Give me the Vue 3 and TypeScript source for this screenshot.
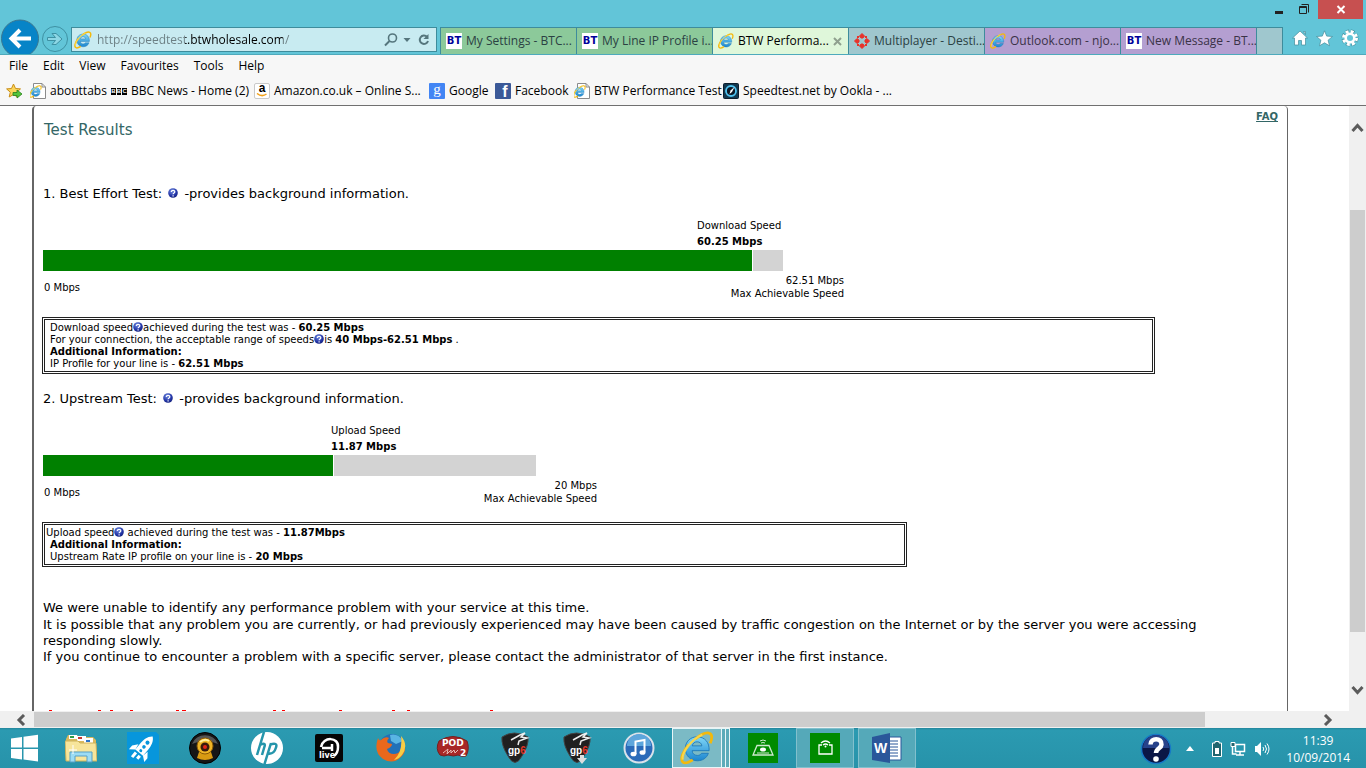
<script setup lang="ts">
import { ref } from 'vue'

interface Tab {
  title: string
  icon: 'bt' | 'ie' | 'diamond'
  tone: 'green' | 'active' | 'teal' | 'purple'
}

interface SpeedChart {
  label: string
  value: string
  max: string
  barWidth: number
  filled: number
  labelOffset: number
}

const address = ref('http://speedtest.btwholesale.com/')

const tabs: Tab[] = [
  { title: 'My Settings - BTC...', icon: 'bt', tone: 'green' },
  { title: 'My Line IP Profile i...', icon: 'bt', tone: 'green' },
  { title: 'BTW Performa...', icon: 'ie', tone: 'active' },
  { title: 'Multiplayer - Desti...', icon: 'diamond', tone: 'teal' },
  { title: 'Outlook.com - njo...', icon: 'ie', tone: 'purple' },
  { title: 'New Message - BT...', icon: 'bt', tone: 'purple' },
]

const menus = ['File', 'Edit', 'View', 'Favourites', 'Tools', 'Help']

const favourites = [
  { title: 'abouttabs', icon: 'page' },
  { title: 'BBC News - Home (2)', icon: 'bbc' },
  { title: 'Amazon.co.uk – Online S...', icon: 'amazon' },
  { title: 'Google', icon: 'google' },
  { title: 'Facebook', icon: 'facebook' },
  { title: 'BTW Performance Test', icon: 'page' },
  { title: 'Speedtest.net by Ookla - ...', icon: 'ookla' },
]

const download: SpeedChart = { label: 'Download Speed', value: '60.25 Mbps', max: '62.51 Mbps', barWidth: 740, filled: 709, labelOffset: 654 }
const upload: SpeedChart = { label: 'Upload Speed', value: '11.87 Mbps', max: '20 Mbps', barWidth: 493, filled: 290, labelOffset: 288 }

const px = (n: number) => `${n}px`
</script>

<template>
  <div class="screen">
    <svg class="defs" aria-hidden="true">
      <defs>
        <linearGradient id="ieBlue" x1="0" y1="0" x2="0" y2="1">
          <stop offset="0" stop-color="#7fd6f7" /><stop offset="1" stop-color="#1c86cf" />
        </linearGradient>
        <radialGradient id="helpFill" cx=".4" cy=".3" r=".8">
          <stop offset="0" stop-color="#6f8be0" /><stop offset=".6" stop-color="#2436a8" /><stop offset="1" stop-color="#101c70" />
        </radialGradient>
        <symbol id="ie" viewBox="0 0 32 32">
          <path d="M16 5.500C9.500 5.500 5 10.300 5 16.500S9.500 28 16.300 28c5 0 8.800-2.500 10.400-7h-6.500c-.8 1.400-2.100 2-3.900 2-2.900 0-4.700-1.700-4.900-4.500h16C27.800 10.800 23.500 5.500 16 5.500zM11.500 14c.5-2.400 2.200-3.800 4.600-3.800s4.200 1.400 4.500 3.800z" fill="url(#ieBlue)" stroke="#1b77b8" stroke-width=".8" />
          <path d="M28.500 11.500c1.800-4.500 2-8-.5-9.200-3-1.400-8.500 1.200-13.500 5.200M8 13C2.500 19.500.2 26.500 2.500 29c1.800 2 5.500.8 9.500-1.800" fill="none" stroke="#f3b90c" stroke-width="2.600" />
          <path d="M2.500 27C1.500 20 11 7.500 21 3.500" fill="none" stroke="#f9d54a" stroke-width="2" />
        </symbol>
        <symbol id="help" viewBox="0 0 10 10">
          <circle cx="5" cy="5" r="4.800" fill="url(#helpFill)" />
          <path d="M3.300 3.900C3.300 1.700 6.900 1.800 6.800 3.900 6.700 5 5.200 4.900 5.100 6.200M5.100 7.200v1.200" fill="none" stroke="#fff" stroke-width="1.200" />
        </symbol>
      </defs>
    </svg>

    <header class="chrome">
      <div class="titlebar">
        <button class="win" aria-label="Minimise"><svg width="25" height="19"><path d="M9 12.500h8" stroke="#222" stroke-width="3" /></svg></button>
        <button class="win" aria-label="Restore"><svg width="25" height="19"><path d="M8.500 6.500h7v7h-7zM8 7.500h8M10.500 4.500h7v8" fill="none" stroke="#222" /></svg></button>
        <button class="win close" aria-label="Close"><svg width="45" height="19"><path d="M19.500 6l7 7m0-7l-7 7" stroke="#fff" stroke-width="2" /></svg></button>
      </div>

      <div class="navrow">
        <button class="back" aria-label="Back">
          <svg width="38" height="35"><circle cx="19" cy="19.500" r="18.500" fill="#0784c7" stroke="#3a7791" /><path d="M30 19.500H11M19 11l-8.500 8.500L19 28" fill="none" stroke="#fff" stroke-width="4" /></svg>
        </button>
        <button class="forward" aria-label="Forward">
          <svg width="28" height="28"><circle cx="14" cy="14" r="12.500" fill="none" stroke="#3e91a3" /><path d="M6.500 12.500h8L11 8.500h4l6 5.500-6 5.500h-4l3.500-4h-8z" fill="#8dd7e5" stroke="#3e91a3" /></svg>
        </button>
        <form class="address" @submit.prevent>
          <svg width="18" height="18"><use href="#ie" /></svg>
          <input v-model="address" aria-label="Address" type="text" />
          <button type="button" aria-label="Search"><svg width="14" height="16"><circle cx="8.500" cy="6" r="4" fill="none" stroke="#55767d" stroke-width="1.600" /><path d="M5.500 9L1 13.500" stroke="#55767d" stroke-width="2" /></svg></button>
          <button type="button" aria-label="Show addresses"><svg width="8" height="6"><path d="M.5 1h7L4 5z" fill="#55767d" /></svg></button>
          <button type="button" class="reload" aria-label="Refresh"><svg width="12" height="14"><path d="M9 3.800A4.200 4.200 0 1 0 10 8" fill="none" stroke="#55767d" stroke-width="2" /><path d="M10.500 1v5H5.500z" fill="#55767d" /></svg></button>
        </form>
        <nav class="tabs" aria-label="Tabs">
          <a v-for="tab in tabs" :key="tab.title" href="#" class="tab" :class="tab.tone">
            <span v-if="tab.icon === 'bt'" class="bt">BT</span>
            <svg v-else-if="tab.icon === 'ie'" width="16" height="16"><use href="#ie" /></svg>
            <svg v-else width="16" height="16" viewBox="0 0 16 16"><path d="M8 .5l2.500 2.500-1.500 2H7L5.500 3zM8 15.500l2.500-2.500-1.500-2H7l-1.500 2zM.5 8L3 5.500l2 1.500v2l-2 1.500zM15.500 8L13 5.500l-2 1.500v2l2 1.500z" fill="#e8332b" stroke="#e8332b" /><path d="M3 3h2v2H3zM11 3h2v2h-2zM3 11h2v2H3zM11 11h2v2h-2z" fill="#e8332b" /></svg>
            <span>{{ tab.title }}</span>
            <svg v-if="tab.tone === 'active'" class="tabclose" width="9" height="9"><path d="M1 1l7 7m0-7L1 8" stroke="#8fa08e" stroke-width="2" /></svg>
          </a>
          <button class="newtab" aria-label="New tab"></button>
        </nav>
        <div class="tools">
          <button aria-label="Home"><svg width="16" height="16"><path d="M8 1l7.500 7H13.500v7h-4v-4.500h-3V15h-4V8H.5zM11.500 1.500h2v3z" fill="#fff" stroke="#438d9b" stroke-width=".7" /></svg></button>
          <button aria-label="Favourites"><svg width="17" height="17"><path d="M8.500.8l2.200 5.300 5.800.4-4.400 3.700 1.400 5.600-5-3-5 3 1.400-5.600L.5 6.500l5.800-.4z" fill="#fff" stroke="#438d9b" stroke-width=".7" /></svg></button>
          <button aria-label="Settings"><svg width="18" height="18" viewBox="0 0 18 18"><circle cx="9" cy="9" r="6.500" fill="none" stroke="#438d9b" stroke-width="4" stroke-dasharray="3.500 1.600" /><circle cx="9" cy="9" r="6.500" fill="none" stroke="#fff" stroke-width="3" stroke-dasharray="2.900 2.200" /><circle cx="9" cy="9" r="4.300" fill="none" stroke="#fff" stroke-width="2.600" /></svg></button>
        </div>
      </div>
    </header>

    <div class="bars">
      <nav class="menus" aria-label="Menu"><button v-for="m in menus" :key="m">{{ m }}</button></nav>
      <nav class="favs" aria-label="Favourites bar">
        <button aria-label="Add to Favourites bar"><svg width="17" height="16"><path d="M7.500 1l2 4.500 5 .4-3.800 3.300 1.100 5-4.300-2.700L3.200 14l1.100-4.800L.6 5.900l4.900-.4z" fill="#fbd65b" stroke="#c98e18" /><path d="M7 9.500h4V7l5 4-5 4v-2.500H7z" fill="#55c43c" stroke="#27801b" stroke-width=".8" /></svg></button>
        <a v-for="fav in favourites" :key="fav.title" href="#">
          <svg v-if="fav.icon === 'page'" width="16" height="16"><path d="M3.500.5h8.500l3.500 3.500v11.500h-12zM12 .5V4h3.500" fill="#fff" stroke="#8b8b8b" /><use href="#ie" x="-1" y="2" width="13" height="13" /></svg>
          <span v-else-if="fav.icon === 'bbc'" class="bbc"><b>B</b><b>B</b><b>C</b></span>
          <span v-else-if="fav.icon === 'amazon'" class="amazon">a<svg width="12" height="4"><path d="M1 .5q5 4 9.500.5" fill="none" stroke="#f2a21b" stroke-width="1.500" /></svg></span>
          <span v-else-if="fav.icon === 'google'" class="google">g</span>
          <span v-else-if="fav.icon === 'facebook'" class="facebook">f</span>
          <svg v-else width="16" height="16"><rect x=".5" y=".5" width="15" height="15" rx="1" fill="#12384f" stroke="#0b1d2c" /><circle cx="8" cy="8" r="5" fill="#0a1725" stroke="#4fc3f0" stroke-width="1.800" /><path d="M6.500 11l1-3.500 4-3.500-2.500 5z" fill="#fff" /></svg>
          <span>{{ fav.title }}</span>
        </a>
      </nav>
    </div>

    <div class="viewport">
      <main class="page">
        <div class="panel">
          <div class="head">
            <h1>Test Results</h1>
            <a href="#" class="faq">FAQ</a>
          </div>

          <section>
            <h2>1. Best Effort Test: <svg class="q" width="10" height="10"><use href="#help" /></svg> -provides background information.</h2>
            <div class="chart">
              <div class="reading" :style="{ marginLeft: px(download.labelOffset) }">{{ download.label }}<br /><b>{{ download.value }}</b></div>
              <div class="bar" :style="{ width: px(download.barWidth) }"><div class="fill" :style="{ width: px(download.filled) }"></div></div>
              <div class="scale" :style="{ width: px(download.barWidth + 61) }"><span>0 Mbps</span><span class="max">{{ download.max }}<br />Max Achievable Speed</span></div>
            </div>
            <div class="summary wide">
              <p>Download speed<svg class="q" width="10" height="10"><use href="#help" /></svg>achieved during the test was - <b>60.25 Mbps</b></p>
              <p>For your connection, the acceptable range of speeds<svg class="q" width="10" height="10"><use href="#help" /></svg>is <b>40 Mbps-62.51 Mbps</b> .</p>
              <p><b>Additional Information:</b></p>
              <p>IP Profile for your line is - <b>62.51 Mbps</b></p>
            </div>
          </section>

          <section>
            <h2>2. Upstream Test: <svg class="q" width="10" height="10"><use href="#help" /></svg> -provides background information.</h2>
            <div class="chart">
              <div class="reading" :style="{ marginLeft: px(upload.labelOffset) }">{{ upload.label }}<br /><b>{{ upload.value }}</b></div>
              <div class="bar" :style="{ width: px(upload.barWidth) }"><div class="fill" :style="{ width: px(upload.filled) }"></div></div>
              <div class="scale" :style="{ width: px(upload.barWidth + 61) }"><span>0 Mbps</span><span class="max">{{ upload.max }}<br />Max Achievable Speed</span></div>
            </div>
            <div class="summary">
              <p class="flush">Upload speed<svg class="q" width="10" height="10"><use href="#help" /></svg> achieved during the test was - <b>11.87Mbps</b></p>
              <p><b>Additional Information:</b></p>
              <p>Upstream Rate IP profile on your line is - <b>20 Mbps</b></p>
            </div>
          </section>

          <div class="verdict">
            <p>We were unable to identify any performance problem with your service at this time.</p>
            <p>It is possible that any problem you are currently, or had previously experienced may have been caused by traffic congestion on the Internet or by the server you were accessing responding slowly.</p>
            <p>If you continue to encounter a problem with a specific server, please contact the administrator of that server in the first instance.</p>
          </div>
          <svg class="cut" width="500" height="1" aria-hidden="true"><path d="M6 0h3v1h-3zM55 0h3v1h-3zM67 0h3v1h-3zM87 0h3v1h-3zM133 0h3v1h-3zM139 0h4v1h-4zM230 0h3v1h-3zM239 0h3v1h-3zM296 0h3v1h-3zM349 0h3v1h-3zM364 0h3v1h-3zM447 0h3v1h-3z" fill="#ff0000" /></svg>
        </div>
      </main>
      <div class="vscroll">
        <button aria-label="Scroll up"><svg width="13" height="10"><path d="M1.500 8l5-5.500 5 5.500" fill="none" stroke="#5b5b5b" stroke-width="3" /></svg></button>
        <div class="vtrack"><div class="vthumb"></div></div>
        <button aria-label="Scroll down"><svg width="13" height="10"><path d="M1.500 2l5 5.500 5-5.500" fill="none" stroke="#5b5b5b" stroke-width="3" /></svg></button>
      </div>
    </div>
    <div class="hscroll">
      <button class="left" aria-label="Scroll left"><svg width="10" height="12"><path d="M8 1L3 6l5 5" fill="none" stroke="#5b5b5b" stroke-width="3" /></svg></button>
      <div class="htrack"><div class="hthumb"></div></div>
      <button class="right" aria-label="Scroll right"><svg width="10" height="12"><path d="M2 1l5 5-5 5" fill="none" stroke="#5b5b5b" stroke-width="3" /></svg></button>
    </div>

    <footer class="taskbar">
      <button class="start" aria-label="Start"><svg width="28" height="28"><path d="M0 4.500l11-1.600v10.500H0zM12.500 2.700L27 .7v12.700H12.500zM0 15h11v10.500L0 24zM12.500 15H27v12.500l-14.500-2z" fill="#fff" /></svg></button>
      <button aria-label="File Explorer"><svg width="32" height="32">
        <path d="M1 7l2-4h9l2 2h14l3 3v20H1z" fill="#d9b95d" /><path d="M4 3h8v4H4z" fill="#fff" /><path d="M5 4h4v2H5z" fill="#2f9d48" /><path d="M12 4h9v5h-9z" fill="#fff" /><path d="M13 5h4v2h-4z" fill="#c83a2f" /><path d="M19 6h9v5h-9z" fill="#fff" /><path d="M21 8h4v2h-4z" fill="#2c75c6" />
        <path d="M0 9h13l2 2h16l1 18H1z" fill="#f7e59b" stroke="#cdb25b" /><path d="M5 30V20h22v10h-5v-6H10v6z" fill="#9cdcf4" stroke="#569fc5" /><path d="M8 13v9M4 18h8" stroke="#fff" /></svg></button>
      <button aria-label="Launcher"><svg width="32" height="32"><path d="M0 0h29l3 3v29H0z" fill="#0796dc" /><g transform="rotate(40 16 16)"><path d="M16 1c4 3 5 8 5 13v8H11v-8c0-5 1-10 5-13zM10 16l-4 5v5l5-4zM22 16l4 5v5l-5-4zM12 24h3v6h-3zM17 24h3v4h-3z" fill="#fff" /><circle cx="16" cy="9" r="2" fill="#0796dc" /><circle cx="16" cy="14.500" r="1.800" fill="#0796dc" /><circle cx="16" cy="19.500" r="1.500" fill="#0796dc" /></g></svg></button>
      <button aria-label="Webcam"><svg width="32" height="32"><circle cx="16" cy="16" r="15.500" fill="#161616" stroke="#000" /><path d="M3 12a14 14 0 0 1 26 0q-13-6-26 0z" fill="#555" /><path d="M10 20h12l2 6q-8 4-16 0z" fill="#d89a12" /><circle cx="16" cy="14" r="8" fill="#efb526" stroke="#8b5a06" /><circle cx="16" cy="15" r="4.500" fill="#3a1a0c" /><circle cx="16" cy="15" r="2" fill="#e12318" /><path d="M11 10q5-4 9-1" fill="none" stroke="#fff0a0" stroke-width="2" /></svg></button>
      <button aria-label="HP"><svg width="32" height="32"><circle cx="16" cy="16" r="16" fill="#fff" /><path d="M13 0L6 23M9 13q6-3 4.500 1.500L11 23M20 11l-6.500 21M19 12.500q8-2.500 6 3-2 7-8 6" fill="none" stroke="#2595ab" stroke-width="2.500" /></svg></button>
      <button aria-label="Live"><svg width="30" height="30"><rect x="1" y="1" width="28" height="28" rx="2" fill="#050505" /><path d="M7 14C9 3 25 4 24 14q0 6-4 9M8 15h11M18 11v7" fill="none" stroke="#fff" stroke-width="2.500" /><text x="5" y="25" class="tlive">live</text></svg></button>
      <button aria-label="Firefox"><svg width="32" height="32"><circle cx="17" cy="15" r="13" fill="#2271b8" /><path d="M15 3q8-2 13 6l-7 3-5-3z" fill="#59b5e3" /><path d="M3 6q1 3 3 2 4-4 8-2-3 3-1 5l4 1q0 3-5 5 1 5 7 5 8 0 9-13 5 9-2 16-8 8-18 2Q-2 20 3 6z" fill="#e9681c" /><path d="M26 4q8 9 1 19-3 4-8 5 9-8 7-24z" fill="#f8cd45" /></svg></button>
      <button aria-label="POD Farm 2"><svg width="34" height="32"><path d="M3 9q14-9 28 0 3 8-1 15-5 1-8-1-4 2-10 0-4 2-8 0-5-6-1-14z" fill="#a82727" stroke="#762020" /><text x="6" y="14" class="tpod">POD</text><text x="24" y="24" class="tpod">2</text><path d="M7 21l5-4-1 5 4-4 0 3 3-3 1 3 3-3" fill="none" stroke="#e7bbb5" /></svg></button>
      <button v-for="n in 2" :key="n" :aria-label="'Guitar Pro ' + n"><svg width="32" height="32"><path d="M3 5q12-8 26 0 1 8-6 19-7 13-14 0Q2 13 3 5z" fill="#202020" stroke="#444" /><path d="M12 8l9-5 5-2-4 4 6 1-8 3-1 4" fill="none" stroke="#eee" stroke-width="1.500" /><text x="9" y="22" class="tgp">gp<tspan fill="#e43629">6</tspan></text><path v-if="n === 2" d="M19 23h4v3h3l-5 6-5-6h3z" fill="#ddd" /></svg></button>
      <button aria-label="iTunes"><svg width="32" height="32"><circle cx="16" cy="16" r="14.500" fill="#2a6bb9" stroke="#d9e2ea" stroke-width="2" /><path d="M4 14a12 12 0 0 1 24 0z" fill="#5da6dc" /><path d="M12.500 22V9.500l9-1.500v12" fill="none" stroke="#fff" stroke-width="2" /><ellipse cx="10.500" cy="22" rx="3" ry="2.300" fill="#fff" /><ellipse cx="19.500" cy="20.500" rx="3" ry="2.300" fill="#fff" /></svg></button>
      <button class="stack" aria-label="Internet Explorer"><span class="face"><svg width="34" height="34"><use href="#ie" /></svg></span><span class="edge"></span><span class="edge"></span></button>
      <button aria-label="Hub"><svg width="30" height="30"><path d="M0 0h30v30H0z" fill="#008a00" /><path d="M9 12.500h12l4 9.500H5z" fill="none" stroke="#cfe9cf" stroke-width="1.300" /><ellipse cx="15" cy="16.500" rx="3" ry="2" fill="#fff" /><path d="M12 8q3-2 6 0M13 10q2-1 4 0M9 20h12" fill="none" stroke="#cfe9cf" /></svg></button>
      <button class="open" aria-label="Hub Manager"><svg width="30" height="30"><path d="M0 0h30v30H0z" fill="#008a00" /><path d="M12 12H9v9h13v-9h-3M11 10q4.500-4 9 0M13 12q2.500-2 5 0" fill="none" stroke="#fff" stroke-width="1.300" /><circle cx="15.500" cy="13.500" r="1" fill="#fff" /></svg></button>
      <button class="open" aria-label="Word"><svg width="32" height="30"><path d="M17 4h13v23H17z" fill="#fff" stroke="#2a579a" /><path d="M19 8h8M19 11h8M19 14h8M19 17h8M19 20h8M19 23h8" stroke="#2a579a" /><path d="M1 4l18-4v30L1 27z" fill="#2a579a" /><text x="3" y="20" class="tword">W</text></svg></button>

      <div class="tray">
        <button aria-label="Help"><svg width="32" height="32"><circle cx="16" cy="16" r="14.500" fill="#0b1746" stroke="#1679c7" stroke-width="1.500" /><path d="M3 15a13 13 0 0 1 26 0z" fill="#27428a" /><path d="M10.500 11.500c0-7 11.500-7 11 0-.2 4-5.300 3.500-5.500 8.500" fill="none" stroke="#fff" stroke-width="4.500" /><circle cx="16" cy="26" r="2.800" fill="#fff" /></svg></button>
        <button aria-label="Show hidden icons"><svg width="8" height="5"><path d="M0 5l4-5 4 5z" fill="#fff" /></svg></button>
        <button aria-label="Battery"><svg width="10" height="16"><path d="M3 2V.5h4V2h2.500v13.500h-9V2z" fill="#20656f" stroke="#fff" /><path d="M3 7h4v6H3z" fill="#fff" /></svg></button>
        <button aria-label="Network"><svg width="16" height="16"><path d="M5.500 3.500h9v7h-9zM10 11v3M6 14h8M2.500 6v7h4" fill="none" stroke="#fff" stroke-width="1.500" /><path d="M1 1.500h4v4H1z" fill="#20656f" stroke="#fff" /></svg></button>
        <button aria-label="Volume"><svg width="16" height="16"><path d="M1 5h2l4-4v14l-4-4H1z" fill="#fff" /><path d="M9 6q1.500 2 0 4M11 4q3 4 0 8M13 2.500q4 5.500 0 11" fill="none" stroke="#fff" /></svg></button>
        <time class="clock">11:39<br />10/09/2014</time>
      </div>
    </footer>
  </div>
</template>

<style>
body { overflow: hidden; background: #fff; }
</style>

<style scoped>
.screen { height: 100vh; display: flex; flex-direction: column; font: 12px/16px "Open Sans", "Noto Sans", sans-serif; color: #000; overflow: hidden; }
.defs { position: absolute; width: 0; height: 0; }
button { border: 0; padding: 0; margin: 0; background: none; font: inherit; color: inherit; display: flex; align-items: center; justify-content: center; flex: none; }
a { color: inherit; text-decoration: none; }
p, h1, h2 { margin: 0; font-weight: normal; }
svg { flex: none; }

.chrome { background: #62c5d8; border-bottom: 1px solid #4eaabc; flex: none; }
.titlebar { height: 19px; display: flex; justify-content: flex-end; padding-right: 3px; }
.titlebar .close { background: #c75050; margin-left: 2px; }
.navrow { height: 35px; display: flex; align-items: flex-end; padding-left: 1px; }
.forward { margin: 0 2px 1px; }
.address { box-sizing: border-box; width: 366px; height: 25px; margin: 0 3px 2px 0; border: 1px solid #3e8c9c; background: #c8ebf1; display: flex; align-items: center; gap: 5px; padding: 0 6px 0 2px; }
.address input { flex: 1; min-width: 0; border: 0; outline: 0; padding: 0; font: inherit; color: transparent; background: linear-gradient(90deg, #6c7f83 88px, #000 88px, #000 186px, #6c7f83 186px); background-clip: text; -webkit-background-clip: text; }
.address .reload { margin-left: 2px; }
.tabs { display: flex; height: 27px; }
.tab { box-sizing: border-box; width: 136px; border: 1px solid #3e8c9c; border-width: 1px 0 0 1px; display: flex; align-items: center; gap: 4px; padding: 0 0 0 5px; color: #2b4143; white-space: nowrap; }
.tab.green { background: #8cc99a; }
.tab.active { background: #dff7da; color: #000; }
.tab.teal { background: #9fc7ce; }
.tab.purple { background: #b49fd1; color: #3a3247; }
.tabclose { margin: 0 6px 0 auto; }
.newtab { box-sizing: border-box; width: 27px; border: 1px solid #3e8c9c; border-bottom: 0; background: #9fc7ce; }
.bt { width: 16px; height: 16px; flex: none; background: #fff; color: #00009a; font: bold 10px/16px "DejaVu Sans", sans-serif; text-align: center; }
.tools { display: flex; gap: 8px; height: 32px; align-items: center; margin: 0 7px 0 auto; }

.bars { background: #f7f7f7; border-bottom: 1px solid #707070; flex: none; }
.menus { height: 22px; display: flex; gap: 15px; padding-left: 9px; align-items: center; }
.favs { height: 28px; display: grid; grid-template-columns: 24px 81px 143px 175px 66px 79px 149px 170px; padding-left: 6px; align-items: center; }
.favs button { justify-content: flex-start; }
.favs a { display: flex; gap: 4px; align-items: center; white-space: nowrap; }
.bbc { width: 16px; display: flex; gap: 1px; }
.bbc b { flex: 1; background: #000; color: #fff; font: bold 6px/7px "Liberation Sans", sans-serif; text-align: center; }
.amazon { box-sizing: border-box; width: 16px; height: 16px; border: 1px solid #c9c9c9; border-radius: 2px; background: #fff; font: bold 12px/9px "Liberation Sans", sans-serif; display: flex; flex-direction: column; align-items: center; }
.google, .facebook { width: 16px; height: 16px; background: #4285f4; color: #fff; font: 15px/12px "Liberation Serif", serif; text-align: center; border-radius: 1px; }
.facebook { background: #3b5998; font: bold 16px/18px "Liberation Sans", sans-serif; text-indent: 4px; }

.viewport { flex: 1; min-height: 0; display: flex; }
.page { flex: 1; min-width: 0; overflow: hidden; background: #fff; padding: 0 61px 0 32px; font: 13px/16px "DejaVu Sans", sans-serif; }
.panel { box-sizing: border-box; min-height: 100%; border: solid #666; border-width: 0 1px 0 2px; border-radius: 4px 4px 0 0; padding: 4px 9px 0; }
.head { display: flex; justify-content: space-between; align-items: flex-start; margin-bottom: 45px; }
h1 { font-size: 15px; line-height: 20px; color: #366; margin: 10px 0 0 1px; }
.faq { font: bold 10px/13px "DejaVu Sans", sans-serif; color: #366; text-decoration: underline; }
h2 { font-size: 13px; line-height: 18px; }
h2 .q { margin: 0 2px; }
.chart { font-size: 10px; padding-top: 15px; }
.reading { line-height: 16px; }
.bar { height: 21px; background: #d3d3d3; }
.fill { height: 21px; background: #008000; border-right: 1px solid #fff; }
.scale { display: flex; justify-content: space-between; align-items: center; padding: 3px 0 17px 1px; box-sizing: border-box; line-height: 13px; }
.max { text-align: right; }
.summary { box-sizing: border-box; width: 865px; border: 3px double #222; margin-left: -1px; padding: 2px 5px 1px; font-size: 10px; line-height: 12px; margin-bottom: 33px; }
.summary.wide { width: 1113px; margin-bottom: 16px; }
.summary .q { vertical-align: -1px; }
.summary p { height: 12px; }
.flush { margin-left: -4px; }
.verdict { padding: 0 44px 45px 0; }
.verdict p:first-child { margin-bottom: 1px; }
.cut { display: block; }

.vscroll { width: 17px; background: #f0f0f0; display: flex; flex-direction: column; align-items: center; }
.vscroll button { height: 43px; }
.vtrack { flex: 1; display: flex; flex-direction: column; width: 15px; }
.vtrack::before { content: ""; flex: 61; }
.vthumb { flex: 422; background: #cdcdcd; }
.vtrack::after { content: ""; flex: 36; }
.hscroll { height: 17px; flex: none; background: #f0f0f0; display: flex; align-items: center; }
.hscroll .left { width: 34px; padding-left: 8px; box-sizing: border-box; }
.hscroll .right { width: 43px; margin-right: 17px; }
.htrack { flex: 1; height: 15px; display: flex; }
.hthumb { flex: 1171; background: #cdcdcd; }
.htrack::after { content: ""; flex: 101; }

.taskbar { height: 40px; flex: none; background: linear-gradient(#23859b, #2b9ab1 2px, #2793aa); display: flex; gap: 4px; }
.taskbar > button { width: 58px; }
.taskbar > .start { width: 48px; padding-left: 2px; box-sizing: border-box; }
.taskbar .open { border: 1px solid #82c0cd; background: #55a9b9; box-sizing: border-box; }
.taskbar .stack { align-items: stretch; }
.face { flex: 1; border: 1px solid #e7f5f7; background: #7bbac5; display: flex; align-items: center; justify-content: center; }
.edge { width: 3px; border: solid #e7f5f7; border-width: 1px 1px 1px 0; background: #5babb9; }
.tlive { font: bold 8px "DejaVu Sans", sans-serif; fill: #fff; }
.tpod { font: bold 9px "DejaVu Sans", sans-serif; fill: #fff; }
.tgp { font: bold 10px "Liberation Sans", sans-serif; fill: #fff; }
.tword { font: bold 14px "Liberation Sans", sans-serif; fill: #fff; }
.tray { margin-left: auto; display: flex; align-items: center; gap: 8px; padding: 1px 16px 0 0; color: #fff; }
.tray button:nth-child(1) { margin-right: 6px; }
.tray button:nth-child(2) { margin-right: 10px; }
.clock { text-align: center; line-height: 17px; margin-left: 8px; }
</style>
